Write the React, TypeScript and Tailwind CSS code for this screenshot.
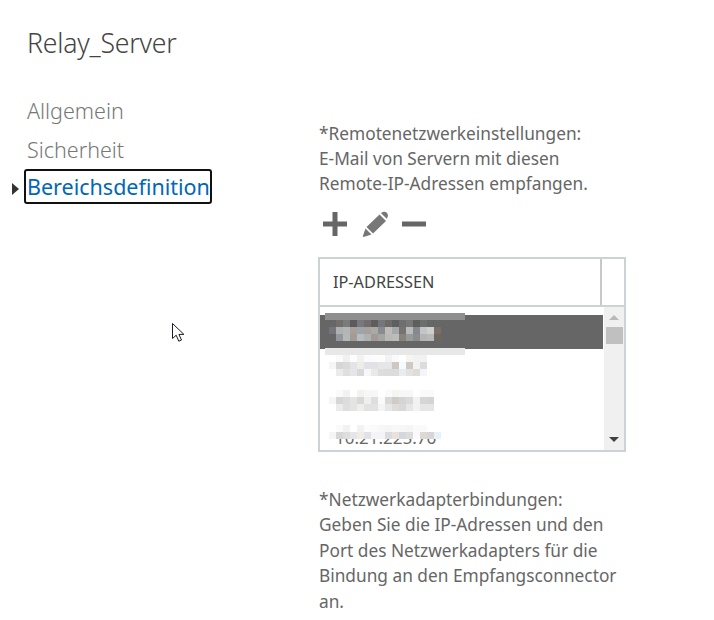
const selectedPixels = [
  ['', '#716e6c', '#7b7b7b', '#5c5a5a', '#777a7c', '#6f6d6d', '#5e5c5c', '#747678', '#6c6a6a', '#5f5f5f', '#6e6f70', '#777777', '#5f5e5e', '#6d6d6d', ''],
  ['#74747a', '#aeb0b2', '#b4b6b6', '#a89f9a', '#9ea5aa', '#a8a09c', '#a9aaa6', '#868c90', '#bdbcb6', '#a4a9ad', '#77736e', '#b9bcbc', '#868890', '#c4c5c6', '#cfcfcf', '#7a6f66'],
  ['', '#94979c', '#b4b8ba', '#a39c96', '#b9bcbc', '#b0b2b2', '#a19a96', '#a8a4a0', '#b8b8b6', '#bcbcb8', '#88827e', '#9a9a98', '#8a8c92', '#b4b4b4', '#b8b8b8', '#6f665e'],
];

const row2Pixels = [
  ['', '#fafafa', '#f0f0f0', '#fdfdfd', '#f2f2f0', '#fbfbfb', '#fcfcfc', '#fdfdfd', '#f2f2f2', '#fafafa', '#ffffff', '#f7f5f3', '#f2f2f2', '#f2f2f2'],
  ['#f5f5f5', '#d6d6d4', '#dcdad8', '#e2e4e8', '#efece6', '#dfe2e8', '#e2e2e4', '#e6e6e8', '#e4e6e8', '#cfc8c2', '#f5fafc', '#cdcac6', '#f2f2f2', '#dcdcdc'],
  ['', '#ebebeb', '#dee0e0', '#e4e6ea', '#d8d8d8', '#f5f7f9', '#e9e9e9', '#dedcdc', '#dcdcdc', '#dcdcdc', '#e8ecf0', '#e2e2e0', '#dedcd8', '#f2f6fa'],
];

const row3Pixels = [
  ['', '#fafafa', '#f2f2f2', '#ffffff', '#f2f2f0', '#f7f7f7', '#f7f7f7', '#ffffff', '#fafafa', '#f4f4f2', '#f7f7f7', '#f7f7f7', '#ffffff', '#fafafa', '#fafafa'],
  ['#f5f5f5', '#d6d6d6', '#dcdcdc', '#e6e4e2', '#d8d8d6', '#efefef', '#dcdfe2', '#fafafa', '#d8d8d8', '#cfccc8', '#d4d4d6', '#dadada', '#f2f2f2', '#d6d6d8', '#d4d4d4'],
  ['', '#ebebeb', '#dcdee0', '#e4e4e4', '#efeeea', '#e2e2e2', '#e2e2e2', '#f4f4f4', '#e6e6e6', '#dfdcd8', '#d8d8d8', '#e6e6e6', '#f2f2f2', '#e6e6e6', '#e6e6e6'],
];

const row4Pixels = [
  ['', '#fafafa', '#f2f2f2', '#ffffff', '#f2f2f0', '#fcfcfc', '#fafafa', '#f5f7f9', '#f5f5f5', '#faf8f6', '#f7f7f7', '#f5f5f5', '#fafafa', '#fafafa'],
  ['#f5f5f5', '#d6d6d6', '#dedede', '#e4e6e8', '#efece6', '#e0e2e8', '#f4f4f4', '#f4f4f4', '#dadde0', '#e8e2da', '#d4d8dc', '#dcdcdc', '#fafafa', '#dcd8d4', '#d6d6d6', '#e8f0f8'],
];

function Pixels({ rows }: { rows: string[][] }) {
  return (
    <div className="flex flex-col">
      {rows.map((cells, r) => (
        <div key={r} className="flex h-[7px]">
          {cells.map((c, i) => (
            <div key={i} className="w-[7px] h-[7px]" style={{ backgroundColor: c || 'transparent' }} />
          ))}
        </div>
      ))}
    </div>
  );
}

export default function App() {
  return (
    <div className="relative w-[714px] h-[620px] overflow-hidden bg-white text-[#666666] font-['Noto_Sans','Open_Sans',sans-serif]">
      <div className="flex">
        {/* Linke Navigation */}
        <div className="w-[319px] shrink-0 pl-[27px] pt-[25px]">
          <h1 className="text-[26.6px] leading-[36px] font-light text-[#444444] tracking-[-0.2px]">Relay_Server</h1>
          <ul className="mt-[30px] text-[21.5px] leading-[39px] font-light text-[#777777]">
            <li>Allgemein</li>
            <li>Sicherheit</li>
            <li className="relative flex items-center">
              <span className="absolute left-[-15px] top-[14px] w-0 h-0 border-y-[6px] border-y-transparent border-l-[7px] border-l-[#333333]" />
              <span className="ml-[-3px] pl-[1px] h-[35px] flex items-center border-2 border-[#111111] rounded-[3px] text-[#0067b8] font-normal">
                Bereichsdefinition
              </span>
            </li>
          </ul>
        </div>

        {/* Einstellungen */}
        <div className="w-[307px] pt-[121px]">
          <div className="text-[17.3px] leading-[25px] text-[#666666]">
            <p>*Remotenetzwerkeinstellungen:</p>
            <p>E-Mail von Servern mit diesen</p>
            <p>Remote-IP-Adressen empfangen.</p>
          </div>

          <div className="flex items-center mt-[13px] ml-[4px] h-[30px]">
            <svg width="24" height="24" viewBox="0 0 24 24" fill="#666666">
              <path d="M9.500 0h5v9.500H24v5h-9.500V24h-5v-9.500H0v-5h9.500z" />
            </svg>
            <svg className="ml-[15px]" width="26" height="26" viewBox="0 0 26 26" fill="#777777">
              <path d="M17.500 3.500 24 10 11 22.500 4.500 16z" />
              <path d="M19 2.200C21 .3 23.300 .3 24.800 1.800 26.300 3.400 26.200 5.700 24.800 7.700z" />
              <path d="M3.500 17.500 9.500 23.500 1.500 26 .8 25.300z" />
            </svg>
            <svg className="ml-[14px]" width="24" height="6" viewBox="0 0 24 6" fill="#666666">
              <rect x="0" y="0.500" width="24" height="5" />
            </svg>
          </div>

          {/* IP-Tabelle */}
          <div className="mt-[18px] ml-[-1px] w-[308px] h-[195px] border-2 border-[#ccd3d7] flex flex-col">
            <div className="h-[48px] shrink-0 flex border-b-2 border-[#ccd3d7]">
              <div className="w-[282px] flex items-center pl-[13px] text-[16.3px] text-[#444444] border-r-2 border-[#c8c8c8]">
                IP-ADRESSEN
              </div>
            </div>
            <div className="flex flex-1 overflow-hidden">
              <div className="w-[283px] overflow-hidden pt-[8px]">
                <div className="relative h-[34px] bg-[#666666] pl-[9px] pt-[5px]">
                  <div className="absolute left-[5px] top-[-2px] w-[140px] h-[7px] bg-[#8f8f8f]" />
                  <div className="absolute left-[5px] top-[33px] w-[140px] h-[7px] bg-[#e8e8e8]" />
                  <Pixels rows={selectedPixels} />
                </div>
                <div className="h-[35px] pl-[9px] pt-[6px]">
                  <Pixels rows={row2Pixels} />
                </div>
                <div className="h-[35px] pl-[9px] pt-[6px]">
                  <Pixels rows={row3Pixels} />
                </div>
                <div className="relative h-[35px]">
                  <span className="absolute left-[15px] top-[6px] text-[17px] leading-[25px] text-[#666666]">10.21.225.76</span>
                  <div className="absolute left-[9px] top-[6px]">
                    <Pixels rows={row4Pixels} />
                  </div>
                </div>
              </div>
              <div className="w-[20px] bg-[#f0f0f0] flex flex-col items-center ml-[1px]">
                <span className="mt-[8px] w-0 h-0 border-x-[5px] border-x-transparent border-b-[5px] border-b-[#b8b8b8]" />
                <span className="mt-[7px] w-[17px] h-[17px] bg-[#c0c0c0]" />
                <span className="mt-auto mb-[8px] w-0 h-0 border-x-[5px] border-x-transparent border-t-[5px] border-t-[#404040]" />
              </div>
            </div>
          </div>

          <div className="mt-[35px] text-[17.3px] leading-[25.4px]">
            <p>*Netzwerkadapterbindungen:</p>
            <p>Geben Sie die IP-Adressen und den</p>
            <p>Port des Netzwerkadapters für die</p>
            <p>Bindung an den Empfangsconnector</p>
            <p>an.</p>
          </div>
        </div>
      </div>

      {/* Mauszeiger */}
      <svg className="absolute left-[172px] top-[323px]" width="14" height="21" viewBox="0 0 14 21">
        <path d="M.5.5v15l3.7-3.3 2.6 6 2.7-1.2-2.600-5.600h5z" fill="#fff" stroke="#1a1a2a" strokeWidth="1" />
      </svg>
    </div>
  );
}
